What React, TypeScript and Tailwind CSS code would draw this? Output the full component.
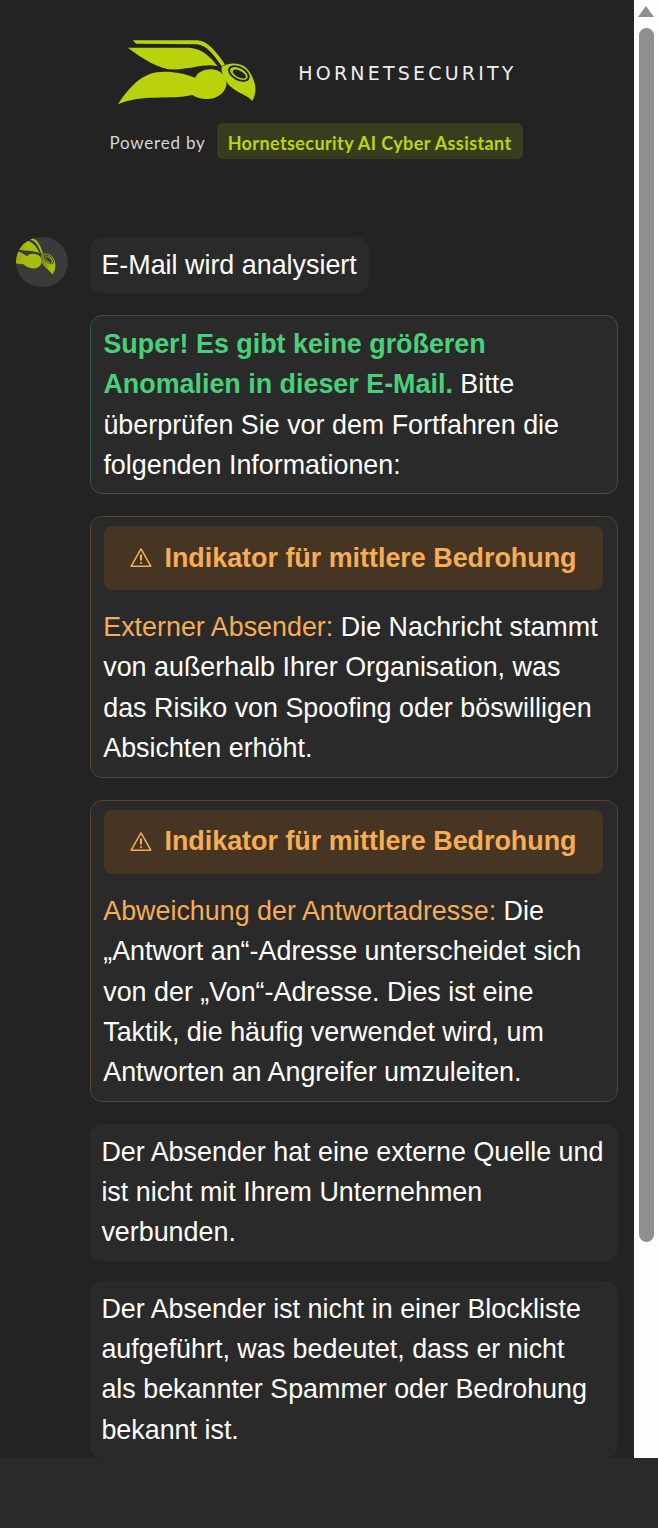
import React from 'react';

const sans = 'font-["Liberation_Sans",Arial,sans-serif]';

function WaspShapes({ fill, dark }: { fill: string; dark: string }) {
  return (
    <>
      <path fill={fill} d="M70 15 L265 15 C297 17 322 50 348 88 L338 93 C312 57 295 31 262 27 L80 25 Z" />
      <path fill={fill} d="M55 37 L240 37 C280 40 305 65 326 93 C290 84 260 98 200 103 C150 105 100 70 55 37 Z" />
      <path fill={fill} d="M25 208 C65 150 100 110 165 110 C200 110 232 118 258 128 C268 104 305 96 330 108 C345 118 356 135 352 152 C345 178 320 192 295 192 C275 192 262 188 250 180 C180 196 100 176 25 208 Z" />
      <path fill={fill} d="M338 95 C370 76 410 83 425 115 C440 140 447 170 430 198 C420 182 388 176 362 152 C345 132 336 112 338 95 Z" />
      <g transform="rotate(28 390 115)">
        <ellipse cx="390" cy="115" rx="35" ry="21" fill={dark} />
        <ellipse cx="390" cy="115" rx="29" ry="15.5" fill={fill} />
        <ellipse cx="392" cy="116" rx="22" ry="10" fill={dark} />
      </g>
    </>
  );
}

function WarningIcon() {
  return (
    <svg width="22" height="21" viewBox="0 0 22 21" fill="none" className="shrink-0">
      <path d="M11 1.8 L20.8 19.2 L1.2 19.2 Z" stroke="#f6ad55" strokeWidth="1.5" strokeLinejoin="round" />
      <path d="M11 7.5 V13.5" stroke="#f6ad55" strokeWidth="2" />
      <circle cx="11" cy="16" r="1.1" fill="#f6ad55" />
    </svg>
  );
}

function WarningCard({ label, children }: { label: string; children: React.ReactNode }) {
  return (
    <div className="rounded-xl border border-[#5c4228] bg-[#2a2a2a] pt-[9px] pr-[14px] pb-[8.6px] pl-[13px]">
      <div className="flex h-16 items-center justify-center gap-3 rounded-lg bg-[#463522]">
        <WarningIcon />
        <span className="font-bold text-[#f6ad55]">Indikator für mittlere Bedrohung</span>
      </div>
      <p className="mt-[17.4px] -ml-[0.8px]">
        <span className="text-[#f6ad55]">{label}</span> {children}
      </p>
    </div>
  );
}

export default function App() {
  return (
    <div className={`${sans} flex h-[1528px] w-[658px] flex-col overflow-hidden bg-[#2a2a2a] text-[26.88px] leading-[40.32px] text-white`}>
      <div className="flex h-[1458px]">
        <main className="flex w-[634px] flex-col overflow-hidden bg-[#232323]">
          <header className="flex flex-col items-center pt-10">
            <div className="flex items-center gap-10">
              <svg width="141" height="65" viewBox="24 14 422 196">
                <WaspShapes fill="#b9d20b" dark="#232323" />
              </svg>
              <span className='font-["DejaVu_Sans",sans-serif] text-[19px] leading-[24px] tracking-[3.2px] text-[#efefef]'>HORNETSECURITY</span>
            </div>
            <div className="mt-[18px] flex items-center gap-[11px] pr-[2px]">
              <span className='pt-1 font-["Lato",sans-serif] text-[17px] leading-6 tracking-[0.8px] text-[#d6d6d6]'>Powered by</span>
              <span className='rounded-md bg-[#393d20] px-[11px] pt-2 pb-1 font-["Lato",sans-serif] text-[18px] leading-6 font-bold tracking-[0.4px] text-[#bcd50d]'>Hornetsecurity AI Cyber Assistant</span>
            </div>
          </header>

          <div className="mt-[78px] flex gap-[22px] pr-4 pl-4">
            <div className="h-[50px] w-[52px] shrink-0 overflow-hidden rounded-full bg-[#3a3a3a]">
              <svg viewBox="220 -27 300 300" className="h-full w-full">
                <defs>
                  <linearGradient id="avatarLime" x1="0" y1="0" x2="1" y2="0">
                    <stop offset="0" stopColor="#6d7a12" />
                    <stop offset="0.7" stopColor="#a8bd10" />
                  </linearGradient>
                </defs>
                <g transform="rotate(14 430 198)">
                  <WaspShapes fill="url(#avatarLime)" dark="#3a3a3a" />
                </g>
              </svg>
            </div>

            <div className="flex min-w-0 flex-1 flex-col items-start gap-[21.6px]">
              <div className="rounded-xl bg-[#2a2a2a] pt-2 pr-3 pb-2 pl-[11.4px]">E-Mail wird analysiert</div>

              <div className="w-full rounded-xl border border-[#2f5a42] bg-[#2a2a2a] py-2 pr-[14px] pl-[12.4px]">
                <span className="font-bold text-[#48d17a]">Super! Es gibt keine größeren Anomalien in dieser E-Mail.</span> Bitte überprüfen Sie vor dem Fortfahren die folgenden Informationen:
              </div>

              <div className="w-full">
                <WarningCard label="Externer Absender:">
                  Die Nachricht stammt von außerhalb Ihrer Organisation, was das Risiko von Spoofing oder böswilligen Absichten erhöht.
                </WarningCard>
              </div>

              <div className="w-full">
                <WarningCard label="Abweichung der Antwortadresse:">
                  Die „Antwort an“-Adresse unterscheidet sich von der „Von“-Adresse. Dies ist eine Taktik, die häufig verwendet wird, um Antworten an Angreifer umzuleiten.
                </WarningCard>
              </div>

              <div className="w-full rounded-xl bg-[#2a2a2a] py-2 pr-3 pl-[11.4px]">
                Der Absender hat eine externe Quelle und ist nicht mit Ihrem Unternehmen verbunden.
              </div>

              <div className="-mt-[1.5px] w-full rounded-xl bg-[#2a2a2a] py-2 pr-3 pl-[11.4px]">
                Der Absender ist nicht in einer Blockliste aufgeführt, was bedeutet, dass er nicht als bekannter Spammer oder Bedrohung bekannt ist.
              </div>
            </div>
          </div>
        </main>

        {/* scrollbar */}
        <div className="flex w-6 flex-col items-center bg-[#fdfdfd] pt-[6px]">
          <svg width="16" height="11" viewBox="0 0 16 11">
            <path d="M8 0 L16 11 H0 Z" fill="#8f8f8f" />
          </svg>
          <div className="mt-[11px] h-[1214px] w-[15px] rounded-full bg-[#8f8f8f]" />
        </div>
      </div>
    </div>
  );
}
